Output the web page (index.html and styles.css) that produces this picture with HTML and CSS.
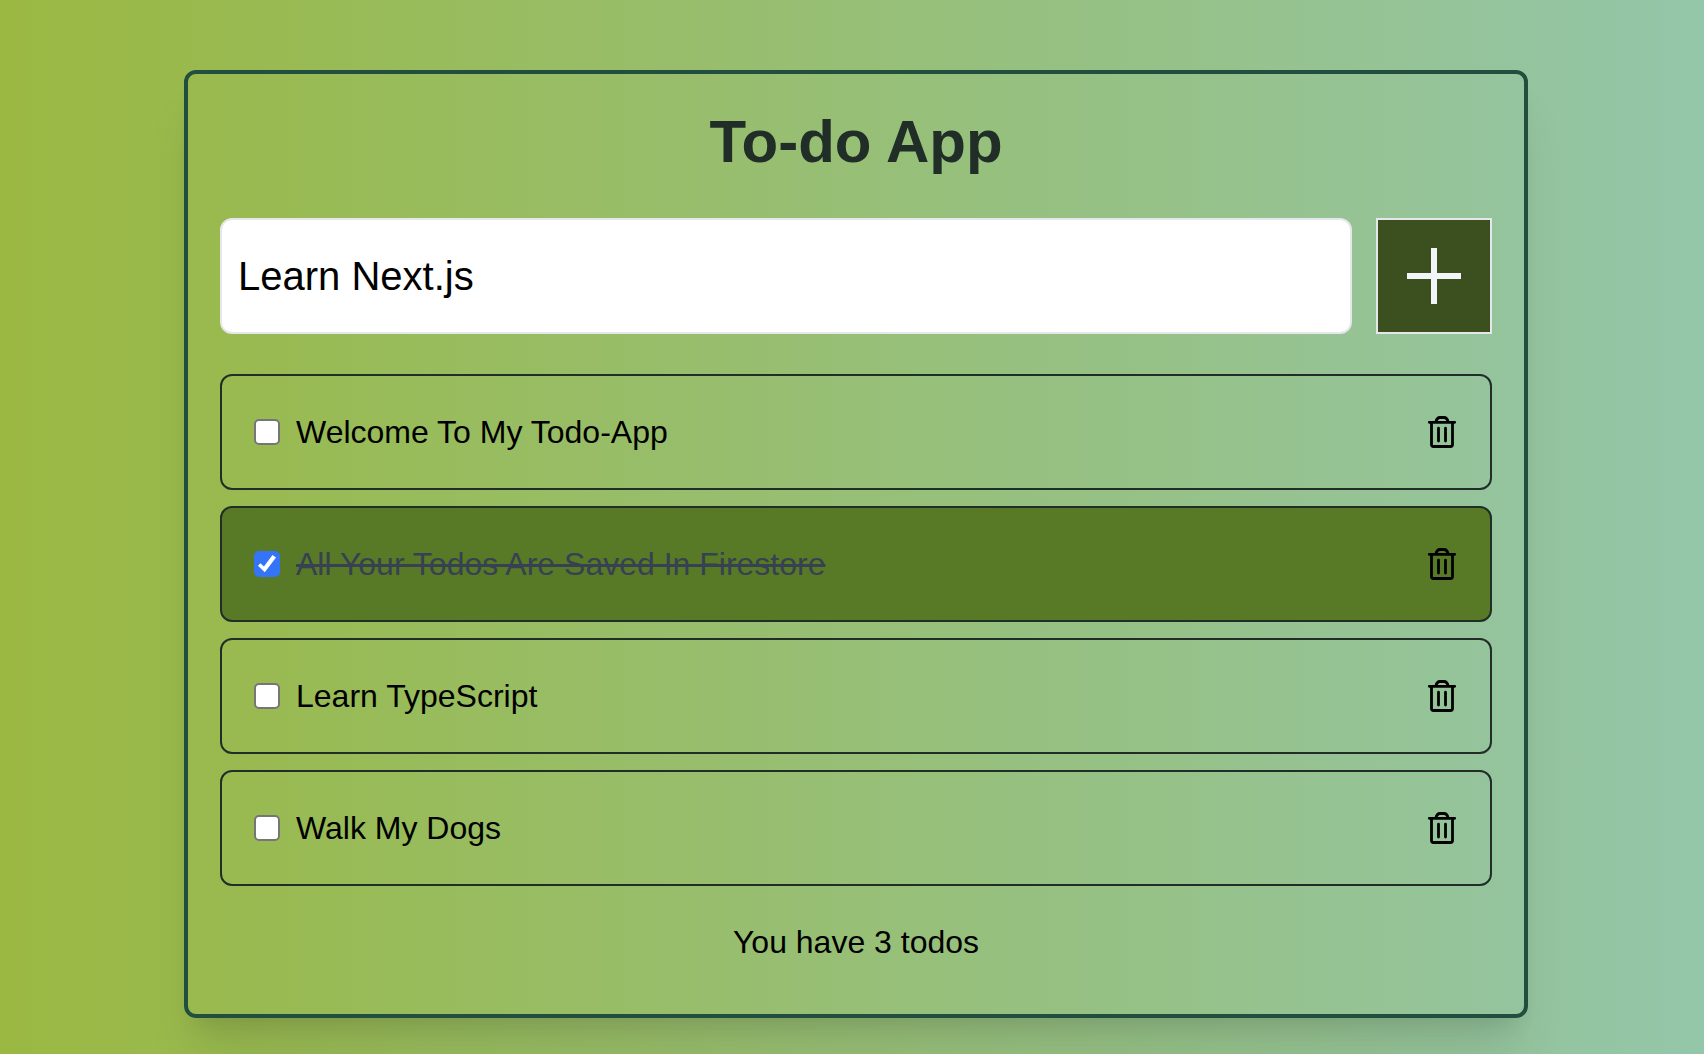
FILE: index.html
```html
<!DOCTYPE html>
<html lang="en">
<head>
<meta charset="utf-8">
<title>To-do App</title>
<link rel="stylesheet" href="styles.css">
</head>
<body>
<svg class="sprite" aria-hidden="true">
  <symbol id="trash" viewBox="0 0 32 32">
    <path d="M3.300 6.300H28.700M9.800 6.300Q10.800 1.500 14 1.500H18Q21.200 1.500 22.200 6.300M5.500 6.300V28.500Q5.500 30.500 7.500 30.500H24.500Q26.500 30.500 26.500 28.500V6.300M12.500 12.200V25M19.500 12.200V25" fill="none" stroke="currentColor" stroke-width="2.800" stroke-linecap="round" stroke-linejoin="round"/>
  </symbol>
</svg>
<main class="card">
  <h1 class="title">To-do App</h1>
  <form class="add-form">
    <input class="add-input" type="text" aria-label="New todo" value="Learn Next.js">
    <button class="add-button" type="button" aria-label="Add todo">
      <svg class="plus" viewBox="0 0 54 56"><path d="M27 0V56M0 28H54" stroke="currentColor" stroke-width="6"/></svg>
    </button>
  </form>
  <ul class="list">
    <li class="item">
      <label class="todo"><input class="check" type="checkbox"><span>Welcome To My Todo-App</span></label>
      <button class="delete" type="button" aria-label="Delete"><svg class="trash"><use href="#trash"/></svg></button>
    </li>
    <li class="item done">
      <label class="todo"><input class="check" type="checkbox" checked><span>All Your Todos Are Saved In Firestore</span></label>
      <button class="delete" type="button" aria-label="Delete"><svg class="trash"><use href="#trash"/></svg></button>
    </li>
    <li class="item">
      <label class="todo"><input class="check" type="checkbox"><span>Learn TypeScript</span></label>
      <button class="delete" type="button" aria-label="Delete"><svg class="trash"><use href="#trash"/></svg></button>
    </li>
    <li class="item">
      <label class="todo"><input class="check" type="checkbox"><span>Walk My Dogs</span></label>
      <button class="delete" type="button" aria-label="Delete"><svg class="trash"><use href="#trash"/></svg></button>
    </li>
  </ul>
  <p class="count">You have 3 todos</p>
</main>
</body>
</html>
```

FILE: styles.css
```css
* { box-sizing: border-box; }
body {
  margin: 0;
  min-height: 100vh;
  padding: 70px 176px 36px 184px;
  font-family: "Liberation Sans", Arial, sans-serif;
  color: #000;
  background: linear-gradient(to right, #9ab842, #94c6a9);
}
.sprite { position: absolute; width: 0; height: 0; }
.card {
  padding: 32px;
  border: 4px solid #214e3f;
  border-radius: 12px;
  box-shadow: 0 40px 50px -10px rgba(0, 0, 0, 0.1), 0 16px 20px -12px rgba(0, 0, 0, 0.1);
}
.title {
  margin: 0 0 40px;
  font-size: 60px;
  line-height: 72px;
  text-align: center;
  color: #212e27;
}
.add-form { display: flex; gap: 24px; margin-bottom: 40px; }
.add-input {
  flex: 1;
  min-width: 0;
  height: 116px;
  padding: 0 16px;
  border: 2px solid #e5e7eb;
  border-radius: 12px;
  background: #fff;
  color: #000;
  font: 40px "Liberation Sans", Arial, sans-serif;
}
.add-button {
  display: flex;
  align-items: center;
  justify-content: center;
  width: 116px;
  height: 116px;
  padding: 0;
  border: 2px solid #e5e7eb;
  background: #3b501e;
  color: #f1f5f9;
}
.plus { width: 54px; height: 56px; }
.list { margin: 0; padding: 0; list-style: none; }
.item {
  display: flex;
  align-items: center;
  justify-content: space-between;
  height: 116px;
  margin-bottom: 16px;
  padding: 0 32px;
  border: 2px solid #212e27;
  border-radius: 12px;
}
.todo { display: flex; align-items: center; gap: 16px; font-size: 32px; line-height: 48px; }
.check {
  appearance: none;
  width: 26px;
  height: 26px;
  margin: 0;
  border: 2px solid #767676;
  border-radius: 5px;
  background: #fff;
}
.check:checked { border-color: #3375f6; background: #3375f6; }
.check:checked::before {
  content: "";
  display: block;
  width: 22px;
  height: 22px;
  background: #fff;
  clip-path: polygon(9% 58%, 20% 47%, 36% 61%, 75% 9%, 91% 20%, 40% 87%);
}
.done { background: #587a26; }
.done span { color: #374151; text-decoration: line-through; }
.delete { display: flex; padding: 0; border: 0; background: none; color: #000; }
.trash { width: 32px; height: 32px; }
.count { margin: 32px 0 16px; font-size: 32px; line-height: 48px; text-align: center; }
```
